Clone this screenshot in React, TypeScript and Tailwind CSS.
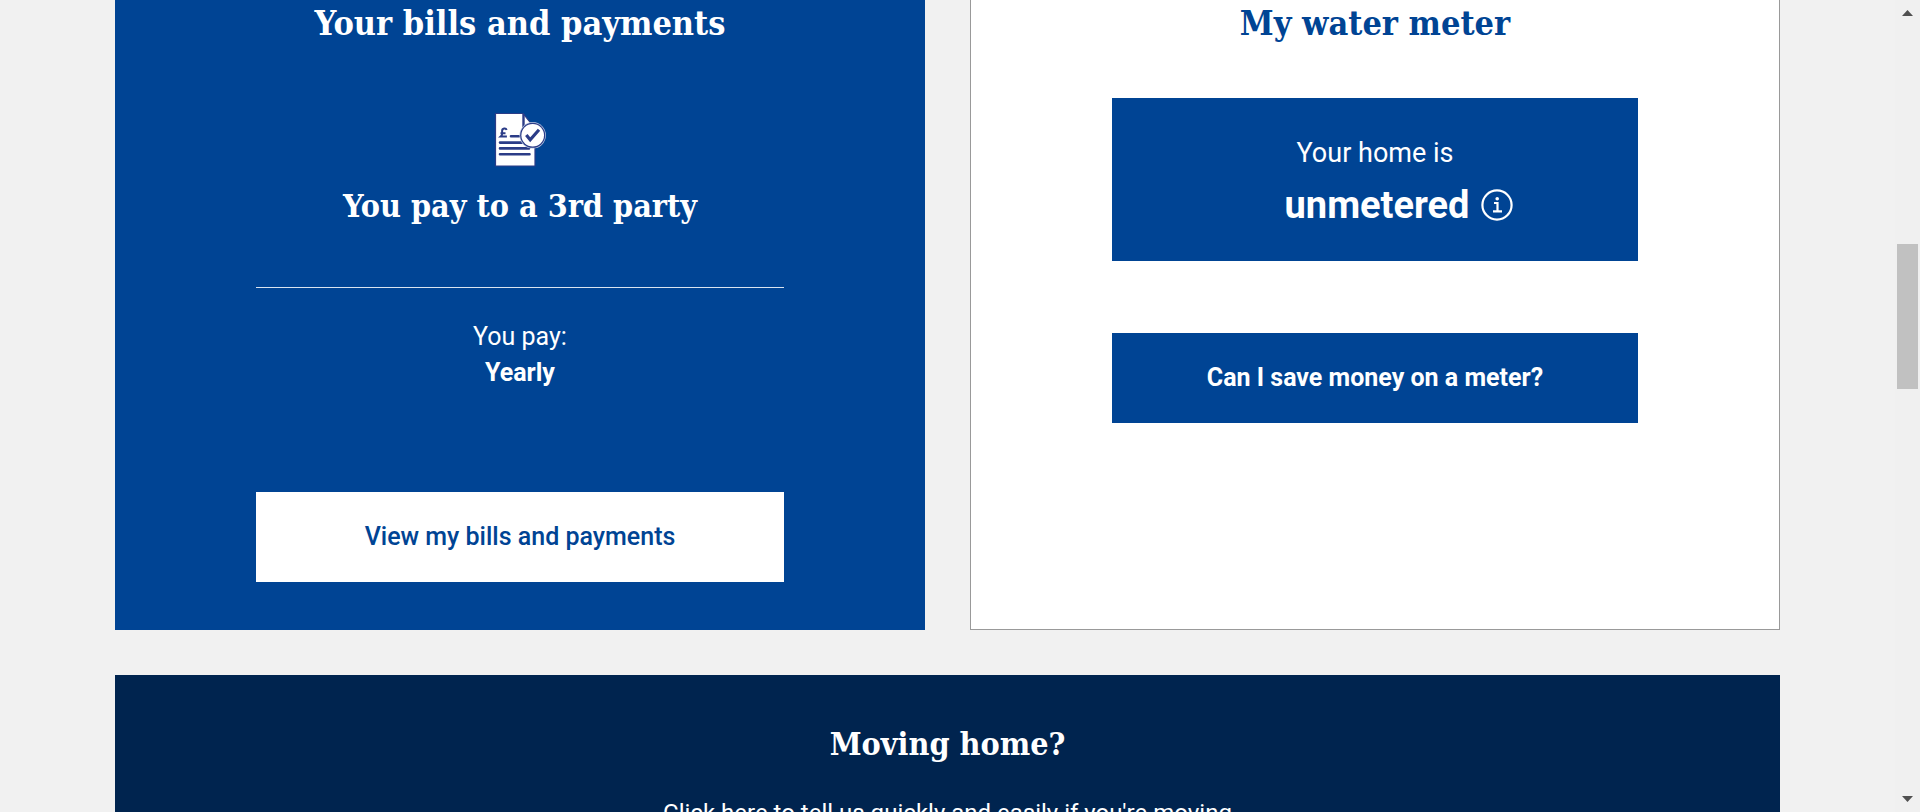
import type { ReactNode } from "react";

const slab = "font-['Roboto_Slab','DejaVu_Serif_Condensed','DejaVu_Serif',serif]";

function CardTitle({ children }: { children: ReactNode }) {
  return <h2 className={`${slab} text-center text-[34px] leading-[46px] font-bold`}>{children}</h2>;
}

function BillIcon() {
  return (
    <svg viewBox="0 0 56 60" className="h-[60px] w-14" aria-hidden="true">
      <path d="M3.500 3.500h27.500l12 15v37.500H3.500z" fill="#fff" stroke="#2b3c87" strokeWidth="1.200" />
      <path d="M31.500 4v15h11" fill="none" stroke="#2b3c87" strokeWidth="2.400" />
      <g stroke="#2b3c87" strokeWidth="2.600" strokeLinecap="round">
        <path d="M19 26.300h8M8 32.600h26M8 38.400h29M8 44.300h29.500" />
      </g>
      <path d="M14.600 20c-.6-2.200-4.500-1.900-4.500 1 0 2 .8 3.800-1.200 5.400h6M8.500 23.200h5" fill="none" stroke="#2b3c87" strokeWidth="2" />
      <circle cx="40.700" cy="25.300" r="13.200" fill="#b9c6e2" />
      <circle cx="40.700" cy="25.300" r="12.500" fill="#2b3c87" />
      <circle cx="40.700" cy="25.300" r="11.300" fill="#fff" />
      <path d="M34.300 25l3.900 4.700 8.800-10" fill="none" stroke="#2b3c87" strokeWidth="3.200" />
    </svg>
  );
}

function InfoIcon() {
  return (
    <svg viewBox="0 0 32 32" className="size-8" fill="none" stroke="#fff" aria-hidden="true">
      <circle cx="16" cy="16" r="14.600" strokeWidth="2.200" />
      <path d="M13 14h3.500v8M12 22.300h9" strokeWidth="2.200" />
      <circle cx="16.200" cy="9.800" r="1.800" fill="#fff" stroke="none" />
    </svg>
  );
}

function PageScrollbar() {
  return (
    <div className="flex w-[25px] shrink-0 flex-col items-center justify-between bg-[#f0f0f0] pt-[10px] pb-[10px]" aria-hidden="true">
      <svg viewBox="0 0 11 6" className="h-[6px] w-[11px]"><path d="M5.500 0L11 6H0z" fill="#505050" /></svg>
      <div className="flex w-[21px] grow flex-col pt-[228px]">
        <div className="h-[145px] bg-[#c1c1c1]" />
      </div>
      <svg viewBox="0 0 11 6" className="h-[6px] w-[11px]"><path d="M0 0h11L5.500 6z" fill="#505050" /></svg>
    </div>
  );
}

export default function App() {
  return (
    <div className="flex h-screen overflow-hidden bg-[#f1f1f1] font-[Roboto,sans-serif]">
      <main className="flex grow flex-col gap-[45px] px-[115px]">
        <div className="grid grid-cols-2 gap-[45px]">
          <section className="flex flex-col items-center bg-[#004494] px-[141px] pb-12 text-white">
            <CardTitle>Your bills and payments</CardTitle>
            <div className="mt-16"><BillIcon /></div>
            <h3 className={`${slab} mt-4 text-center text-[32px] leading-10 font-bold`}>You pay to a 3rd party</h3>
            <hr className="mt-[61px] w-full border-t border-[#d9e3ef]" />
            <p className="mt-[31px] text-center text-[25px] leading-9">
              You pay:
              <strong className="block font-bold">Yearly</strong>
            </p>
            <button type="button" className="mt-[101px] h-[90px] w-full bg-white text-[25px] font-medium text-[#004494]">
              View my bills and payments
            </button>
          </section>
          <section className="flex flex-col items-center border border-t-0 border-[#999] bg-white px-[141px] text-[#004494]">
            <CardTitle>My water meter</CardTitle>
            <div className="mt-[52px] flex h-[163px] w-full flex-col items-center justify-center bg-[#004494] pt-[2px] text-white">
              <p className="text-[27px] leading-10">Your home is</p>
              <div className="mt-2 flex items-center gap-3 pl-12">
                <strong className="text-[38px] leading-[48px] font-bold">unmetered</strong>
                <button type="button" aria-label="About unmetered homes"><InfoIcon /></button>
              </div>
            </div>
            <button type="button" className="mt-[72px] h-[90px] w-full bg-[#004494] text-[25px] font-bold text-white">
              Can I save money on a meter?
            </button>
          </section>
        </div>
        <section className="flex shrink-0 flex-col items-center bg-[#00244f] pt-[49px] pb-12 text-center text-white">
          <h2 className={`${slab} text-[32px] leading-10 font-bold`}>Moving home?</h2>
          <p className="mt-[31px] text-2xl leading-9">Click here to tell us quickly and easily if you're moving</p>
        </section>
      </main>
      <PageScrollbar />
    </div>
  );
}
